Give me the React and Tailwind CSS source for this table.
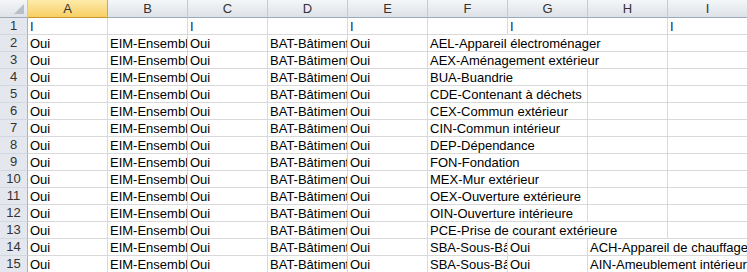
import React from 'react';

const COLS = ['A', 'B', 'C', 'D', 'E', 'F', 'G', 'H', 'I'];

// first five columns repeat on every data row
const lead = [
  { t: 'Oui' },
  { t: 'EIM-Ensemble immobilier' },
  { t: 'Oui' },
  { t: 'BAT-Bâtiment' },
  { t: 'Oui' },
];

const rowOne = COLS.map((c, i) => ({ t: i % 2 === 0 ? 'I' : '', mark: true }));

const withF = (label, span) => {
  const rest = [{ t: label, span }];
  const used = 5 + span;
  for (let i = used; i < 9; i++) rest.push({ t: '' });
  return [...lead, ...rest];
};

const rows = [
  rowOne,
  withF('AEL-Appareil électroménager', 3),
  withF('AEX-Aménagement extérieur', 3),
  withF('BUA-Buandrie', 2),
  withF('CDE-Contenant à déchets', 2),
  withF('CEX-Commun extérieur', 2),
  withF('CIN-Commun intérieur', 2),
  withF('DEP-Dépendance', 2),
  withF('FON-Fondation', 2),
  withF('MEX-Mur extérieur', 2),
  withF('OEX-Ouverture extérieure', 2),
  withF('OIN-Ouverture intérieure', 2),
  withF('PCE-Prise de courant extérieure', 3),
  [...lead, { t: 'SBA-Sous-Bâtiment' }, { t: 'Oui' }, { t: 'ACH-Appareil de chauffage', span: 2 }],
  [...lead, { t: 'SBA-Sous-Bâtiment' }, { t: 'Oui' }, { t: 'AIN-Ameublement intérieur', span: 2 }],
];

const widths = { 1: 'w-[80px]', 2: 'w-[160px]', 3: 'w-[240px]' };

const Corner = () => (
  <div className="w-[28px] h-[18px] shrink-0 border-r border-b border-r-[#c5cad1] border-b-[#9eaab8] bg-gradient-to-b from-[#f4f6f8] to-[#dfe3e8] flex items-end justify-end pr-[3px] pb-[3px]">
    <svg width="10" height="10" viewBox="0 0 10 10">
      <polygon points="10,0 10,10 0,10" fill="#b9bfc7" />
    </svg>
  </div>
);

export default function App() {
  return (
    <div
      className="w-[747px] h-[272px] overflow-hidden bg-white text-[13px] text-black"
      style={{ fontFamily: '"Liberation Sans", Arial, sans-serif' }}
    >
      {/* Column headers */}
      <div className="flex">
        <Corner />
        {COLS.map((c) =>
          c === 'A' ? (
            <div
              key={c}
              className="w-[80px] h-[18px] shrink-0 border-r border-b border-r-[#d9a548] border-b-[#c9962f] bg-gradient-to-b from-[#fdeaaa] to-[#f8cf62] text-[#333] text-center leading-[17px]"
            >
              {c}
            </div>
          ) : (
            <div
              key={c}
              className="w-[80px] h-[18px] shrink-0 border-r border-b border-r-[#c5cad1] border-b-[#9eaab8] bg-gradient-to-b from-[#f4f6f8] to-[#dde2e8] text-[#333] text-center leading-[17px]"
            >
              {c}
            </div>
          )
        )}
      </div>

      {/* Rows */}
      {rows.map((cells, r) => (
        <div key={r} className="flex">
          <div className="w-[28px] h-[17px] shrink-0 border-r border-b border-r-[#a9b3bf] border-b-[#d3d8de] bg-[#e4e8ee] text-[#333] text-center leading-[16px]">
            {r + 1}
          </div>
          {cells.map((cell, i) => (
            <div
              key={i}
              className={`${widths[cell.span || 1]} h-[17px] shrink-0 border-r border-b border-[#d9d9d9] overflow-hidden whitespace-nowrap pl-[2px] pt-[2px] leading-[14px] ${
                cell.mark ? 'text-[#1b1a55]' : ''
              }`}
            >
              {cell.t}
            </div>
          ))}
        </div>
      ))}
    </div>
  );
}
